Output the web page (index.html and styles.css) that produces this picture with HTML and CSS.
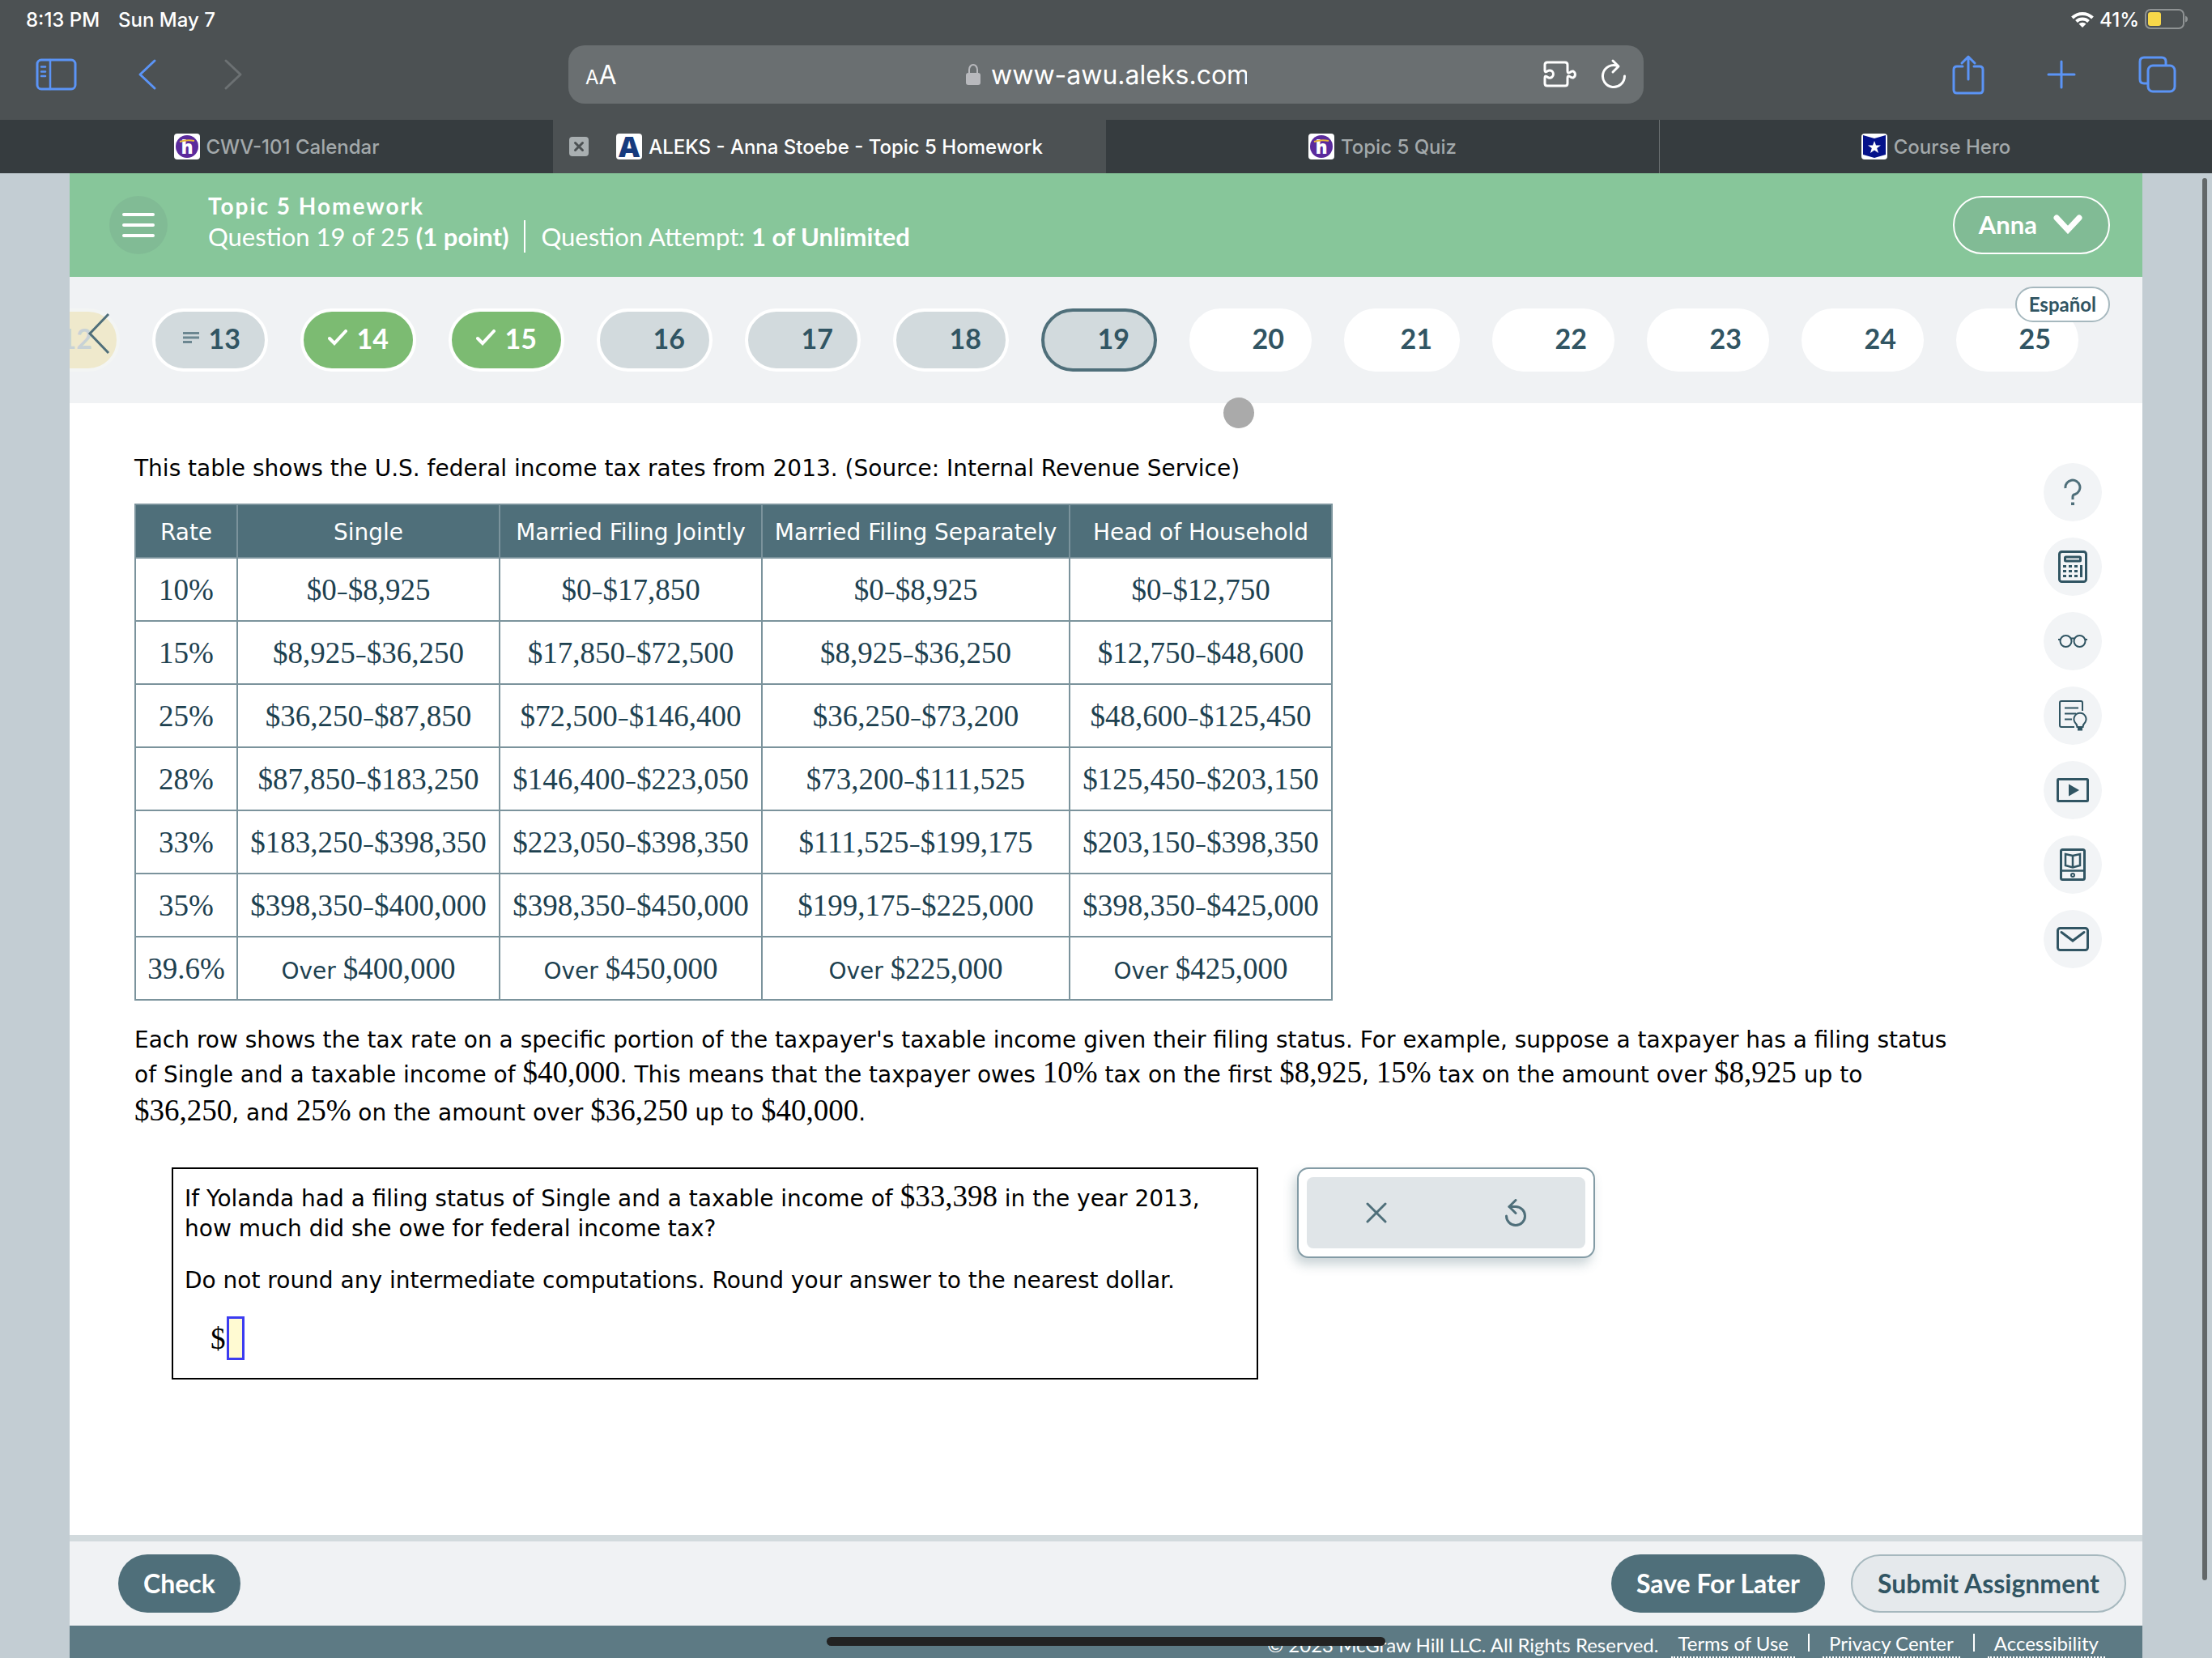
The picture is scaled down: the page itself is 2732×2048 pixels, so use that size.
FILE: index.html
```html
<!DOCTYPE html>
<html lang="en">
<head>
    <meta charset="UTF-8">
    <meta name="viewport" content="width=device-width, initial-scale=1.0">
    <title>ALEKS - Anna Stoebe - Topic 5 Homework</title>
    <link rel="stylesheet" href="styles.css">
</head>
<body>
    <header class="browser">
        <div class="status-bar">
            <span>8:13 PM</span>
            <span class="status-date">Sun May 7</span>
            <div class="status-right">
                <svg width="28" height="20" viewBox="0 0 28 20" fill="none" stroke="#fff" stroke-width="4">
                    <path d="M1.500 8a18 18 0 0 1 25 0"/>
                    <path d="M6.500 12.500a11 11 0 0 1 15 0"/>
                    <path d="M14 20l-4.500-4.500a6.500 6.500 0 0 1 9 0z" fill="#fff" stroke="none"/>
                </svg>
                <span>41%</span>
                <svg width="54" height="26" viewBox="0 0 54 26">
                    <rect x="1" y="1" width="47" height="23" rx="6" fill="none" stroke="#8f9394" stroke-width="2"/>
                    <rect x="4" y="4" width="16" height="17" rx="3" fill="#f8d84a"/>
                    <path d="M50 8.500q3 1 3 4t-3 4z" fill="#8f9394"/>
                </svg>
            </div>
        </div>

        <div class="toolbar">
            <div class="toolbar-left">
                <button class="icon-btn" type="button" aria-label="Sidebar">
                    <svg width="52" height="42" viewBox="0 0 52 42" fill="none" stroke="#5b94f6" stroke-width="3" stroke-linecap="round">
                        <rect x="2" y="3" width="47" height="36" rx="5"/>
                        <path d="M18 3v36M7 11.500h5M7 17.500h5M7 23h5" stroke-width="2.500"/>
                    </svg>
                </button>
                <button class="icon-btn btn-back" type="button" aria-label="Back">
                    <svg width="24" height="40" viewBox="0 0 24 40" fill="none" stroke="#5b94f6" stroke-width="3" stroke-linecap="round" stroke-linejoin="round"><path d="M21 3L3 20l18 17"/></svg>
                </button>
                <button class="icon-btn btn-forward" type="button" aria-label="Forward">
                    <svg width="24" height="40" viewBox="0 0 24 40" fill="none" stroke="#6c7173" stroke-width="3" stroke-linecap="round" stroke-linejoin="round"><path d="M3 3l18 17L3 37"/></svg>
                </button>
            </div>

            <div class="address-bar">
                <button class="icon-btn text-size" type="button" aria-label="Page settings"><span class="small-a">A</span>A</button>
                <div class="address">
                    <svg width="20" height="28" viewBox="0 0 20 28">
                        <rect x="1" y="12" width="18" height="15" rx="3" fill="#b8b9bd"/>
                        <path d="M5 13V8a5 6 0 0 1 10 0v5" fill="none" stroke="#b8b9bd" stroke-width="2"/>
                    </svg>
                    <input class="address-input" type="text" value="www-awu.aleks.com" aria-label="Address">
                </div>
                <div class="address-actions">
                    <button class="icon-btn" type="button" aria-label="Extensions">
                        <svg width="44" height="36" viewBox="0 0 44 36" fill="none" stroke="#fff" stroke-width="3" stroke-linejoin="round">
                            <path d="M6 3h22q3 0 3 3v8q0 3 3 1.500q2-2 4-1.500a4.500 4.500 0 0 1 0 8q-2 .500-4-1.500q-3-1.500-3 1.500v7q0 3-3 3H6q-3 0-3-3v-7q0-3 3-1q3 2.500 6 0a5 5 0 0 0 0-7q-3-2-6 0q-3 2-3-1V6q0-3 3-3z"/>
                        </svg>
                    </button>
                    <button class="icon-btn" type="button" aria-label="Reload">
                        <svg width="32" height="40" viewBox="0 0 32 40" fill="none" stroke="#fff" stroke-width="3" stroke-linecap="round" stroke-linejoin="round">
                            <path d="M21 9.500A13.500 13.500 0 1 0 29.500 22"/>
                            <path d="M15 3l7 7-7 7"/>
                        </svg>
                    </button>
                </div>
            </div>

            <div class="toolbar-right">
                <button class="icon-btn" type="button" aria-label="Share">
                    <svg width="42" height="52" viewBox="0 0 42 52" fill="none" stroke="#5b94f6" stroke-width="3" stroke-linecap="round" stroke-linejoin="round">
                        <path d="M14 16H7q-4 0-4 4v25q0 4 4 4h28q4 0 4-4V20q0-4-4-4h-7"/>
                        <path d="M21 32V4M13 12l8-8 8 8"/>
                    </svg>
                </button>
                <button class="icon-btn" type="button" aria-label="New tab">
                    <svg width="38" height="38" viewBox="0 0 38 38" fill="none" stroke="#5b94f6" stroke-width="3" stroke-linecap="round"><path d="M19 3v32M3 19h32"/></svg>
                </button>
                <button class="icon-btn" type="button" aria-label="Show tabs">
                    <svg width="48" height="48" viewBox="0 0 48 48" fill="none" stroke="#5b94f6" stroke-width="3">
                        <rect x="13" y="13" width="33" height="32" rx="6"/>
                        <path d="M13 35H8q-5 0-5-5V8q0-5 5-5h22q5 0 5 5v5"/>
                    </svg>
                </button>
            </div>
        </div>

        <nav class="tabs">
            <div class="tab">
                <a class="tab-link" href="#">
                    <svg class="favicon" viewBox="0 0 32 32">
                        <rect width="32" height="32" rx="4" fill="#fff"/>
                        <circle cx="16" cy="16" r="14" fill="#5b2a9c"/>
                        <text x="16" y="25" text-anchor="middle" font-family="Open Sans, sans-serif" font-weight="800" font-size="22" fill="#fff">h</text>
                        <path d="M7 10q9-3 18-1" stroke="#e8b73a" stroke-width="2" fill="none"/>
                    </svg>
                    CWV-101 Calendar
                </a>
            </div>
            <div class="tab active">
                <button class="tab-close" type="button" aria-label="Close tab">
                    <svg width="24" height="24" viewBox="0 0 24 24" stroke="#4c5153" stroke-width="3" stroke-linecap="round"><path d="M7.500 7.500l9 9M16.500 7.500l-9 9"/></svg>
                </button>
                <a class="tab-link" href="#">
                    <svg class="favicon" viewBox="0 0 32 32">
                        <rect width="32" height="32" rx="4" fill="#fff"/>
                        <text x="16" y="29" text-anchor="middle" font-family="Open Sans, sans-serif" font-weight="800" font-size="36" fill="#163a7d">A</text>
                    </svg>
                    ALEKS - Anna Stoebe - Topic 5 Homework
                </a>
            </div>
            <div class="tab">
                <a class="tab-link" href="#">
                    <svg class="favicon" viewBox="0 0 32 32">
                        <rect width="32" height="32" rx="4" fill="#fff"/>
                        <circle cx="16" cy="16" r="14" fill="#5b2a9c"/>
                        <text x="16" y="25" text-anchor="middle" font-family="Open Sans, sans-serif" font-weight="800" font-size="22" fill="#fff">h</text>
                        <path d="M7 10q9-3 18-1" stroke="#e8b73a" stroke-width="2" fill="none"/>
                    </svg>
                    Topic 5 Quiz
                </a>
            </div>
            <div class="tab">
                <a class="tab-link" href="#">
                    <svg class="favicon" viewBox="0 0 32 32">
                        <rect width="32" height="32" rx="4" fill="#fff"/>
                        <path d="M2 2l14 4 14-4v24l-14 4-14-4z" fill="#05128a"/>
                        <path d="M16 9l2 5.500h6l-4.800 3.500 1.800 6-5-3.500-5 3.500 1.800-6L8 14.500h6z" fill="#fff"/>
                    </svg>
                    Course Hero
                </a>
            </div>
        </nav>
    </header>

    <div class="page">
        <header class="hw-header">
            <button class="menu-btn" type="button" aria-label="Menu">
                <svg width="40" height="30" viewBox="0 0 40 30" stroke="#fff" stroke-width="4" stroke-linecap="round"><path d="M2 2h36M2 15h36M2 28h36"/></svg>
            </button>
            <div class="hw-titles">
                <h1 class="hw-title">Topic 5 Homework</h1>
                <div class="hw-info">
                    <span>Question 19 of 25 <b>(1 point)</b></span>
                    <span class="hw-attempt">Question Attempt: <b>1 of Unlimited</b></span>
                </div>
            </div>
            <button class="user-btn" type="button">
                Anna
                <svg width="36" height="24" viewBox="0 0 36 24" fill="none" stroke="#fff" stroke-width="7" stroke-linecap="round"><path d="M4 4l14 15L32 4"/></svg>
            </button>
        </header>

        <nav class="question-nav">
            <div class="pills">
                <a class="pill partial" href="#">12</a>
                <a class="pill" href="#"><svg width="20" height="14" viewBox="0 0 20 14" stroke="#6c8791" stroke-width="3"><path d="M0 1.500h20M0 7h20M0 12.500h11"/></svg>13</a>
                <a class="pill done" href="#"><svg width="24" height="20" viewBox="0 0 24 20" fill="none" stroke="#fff" stroke-width="4" stroke-linecap="round"><path d="M2 11l6 6L22 2"/></svg>14</a>
                <a class="pill done" href="#"><svg width="24" height="20" viewBox="0 0 24 20" fill="none" stroke="#fff" stroke-width="4" stroke-linecap="round"><path d="M2 11l6 6L22 2"/></svg>15</a>
                <a class="pill" href="#">16</a>
                <a class="pill" href="#">17</a>
                <a class="pill" href="#">18</a>
                <a class="pill current" href="#">19</a>
                <a class="pill new wide" href="#">20</a>
                <a class="pill new" href="#">21</a>
                <a class="pill new wide" href="#">22</a>
                <a class="pill new wide" href="#">23</a>
                <a class="pill new wide" href="#">24</a>
                <a class="pill new wide" href="#">25</a>
            </div>
            <button class="nav-prev" type="button" aria-label="Previous questions">
                <svg width="28" height="52" viewBox="0 0 28 52" fill="none" stroke="#4f6f7a" stroke-width="3"><path d="M26 2L3 26l23 24"/></svg>
            </button>
            <button class="lang-btn" type="button">Español</button>
            <span class="pointer-dot"></span>
        </nav>

        <main class="content">
            <div class="question">
                <p>This table shows the U.S. federal income tax rates from 2013. (Source: Internal Revenue Service)</p>

                <table class="tax-table">
                    <thead>
                        <tr>
                            <th class="col-rate">Rate</th>
                            <th>Single</th>
                            <th>Married Filing Jointly</th>
                            <th class="col-sep">Married Filing Separately</th>
                            <th>Head of Household</th>
                        </tr>
                    </thead>
                    <tbody>
                        <tr>
                            <td><span class="num">10%</span></td>
                            <td><span class="num">$0</span>–<span class="num">$8,925</span></td>
                            <td><span class="num">$0</span>–<span class="num">$17,850</span></td>
                            <td><span class="num">$0</span>–<span class="num">$8,925</span></td>
                            <td><span class="num">$0</span>–<span class="num">$12,750</span></td>
                        </tr>
                        <tr>
                            <td><span class="num">15%</span></td>
                            <td><span class="num">$8,925</span>–<span class="num">$36,250</span></td>
                            <td><span class="num">$17,850</span>–<span class="num">$72,500</span></td>
                            <td><span class="num">$8,925</span>–<span class="num">$36,250</span></td>
                            <td><span class="num">$12,750</span>–<span class="num">$48,600</span></td>
                        </tr>
                        <tr>
                            <td><span class="num">25%</span></td>
                            <td><span class="num">$36,250</span>–<span class="num">$87,850</span></td>
                            <td><span class="num">$72,500</span>–<span class="num">$146,400</span></td>
                            <td><span class="num">$36,250</span>–<span class="num">$73,200</span></td>
                            <td><span class="num">$48,600</span>–<span class="num">$125,450</span></td>
                        </tr>
                        <tr>
                            <td><span class="num">28%</span></td>
                            <td><span class="num">$87,850</span>–<span class="num">$183,250</span></td>
                            <td><span class="num">$146,400</span>–<span class="num">$223,050</span></td>
                            <td><span class="num">$73,200</span>–<span class="num">$111,525</span></td>
                            <td><span class="num">$125,450</span>–<span class="num">$203,150</span></td>
                        </tr>
                        <tr>
                            <td><span class="num">33%</span></td>
                            <td><span class="num">$183,250</span>–<span class="num">$398,350</span></td>
                            <td><span class="num">$223,050</span>–<span class="num">$398,350</span></td>
                            <td><span class="num">$111,525</span>–<span class="num">$199,175</span></td>
                            <td><span class="num">$203,150</span>–<span class="num">$398,350</span></td>
                        </tr>
                        <tr>
                            <td><span class="num">35%</span></td>
                            <td><span class="num">$398,350</span>–<span class="num">$400,000</span></td>
                            <td><span class="num">$398,350</span>–<span class="num">$450,000</span></td>
                            <td><span class="num">$199,175</span>–<span class="num">$225,000</span></td>
                            <td><span class="num">$398,350</span>–<span class="num">$425,000</span></td>
                        </tr>
                        <tr>
                            <td><span class="num">39.6%</span></td>
                            <td>Over <span class="num">$400,000</span></td>
                            <td>Over <span class="num">$450,000</span></td>
                            <td>Over <span class="num">$225,000</span></td>
                            <td>Over <span class="num">$425,000</span></td>
                        </tr>
                    </tbody>
                </table>

                <p>Each row shows the tax rate on a specific portion of the taxpayer's taxable income given their filing status. For example, suppose a taxpayer has a filing status of Single and a taxable income of <span class="num">$40,000</span>. This means that the taxpayer owes <span class="num">10%</span> tax on the first <span class="num">$8,925</span>, <span class="num">15%</span> tax on the amount over <span class="num">$8,925</span> up to <span class="num">$36,250</span>, and <span class="num">25%</span> on the amount over <span class="num">$36,250</span> up to <span class="num">$40,000</span>.</p>

                <div class="answer-row">
                    <form class="answer-box">
                        <p>If Yolanda had a filing status of Single and a taxable income of <span class="num">$33,398</span> in the year 2013, how much did she owe for federal income tax?</p>
                        <p class="note">Do not round any intermediate computations. Round your answer to the nearest dollar.</p>
                        <div class="answer-line">
                            <label class="num" for="answer">$</label>
                            <input class="answer-input" type="text" id="answer" name="answer">
                        </div>
                    </form>
                    <div class="answer-tools">
                        <div class="answer-tools-inner">
                            <button class="tool-btn" type="button" aria-label="Clear">
                                <svg width="26" height="26" viewBox="0 0 26 26" stroke="#4f6f7a" stroke-width="3" stroke-linecap="round"><path d="M2 2l22 22M24 2L2 24"/></svg>
                            </button>
                            <button class="tool-btn" type="button" aria-label="Undo">
                                <svg width="26" height="34" viewBox="0 0 26 34" fill="none" stroke="#4f6f7a" stroke-width="3" stroke-linecap="round" stroke-linejoin="round"><path d="M5 9.500h8A11.500 11.500 0 1 1 1.500 21"/><path d="M13 1.500l-8 8 8 8"/></svg>
                            </button>
                        </div>
                    </div>
                </div>
            </div>

            <aside class="side-tools">
                <button class="side-btn" type="button" aria-label="Help">
                    <svg width="22" height="34" viewBox="0 0 22 34" fill="none" stroke="#4f6f7a" stroke-width="3"><path d="M2 12a9 9 0 1 1 12 7.500q-3 .500-3 3V26"/><path d="M11 29.500v3.500" stroke-width="4"/></svg>
                </button>
                <button class="side-btn" type="button" aria-label="Calculator">
                    <svg width="36" height="40" viewBox="0 0 36 40" fill="none" stroke="#315563" stroke-width="3">
                        <rect x="1.500" y="1.500" width="33" height="37" rx="3"/>
                        <rect x="8.500" y="8" width="19" height="5" rx="1"/>
                        <path d="M6 19.500h18M6 25.500h18M6 31.500h18" stroke-dasharray="4 3"/>
                        <path d="M28.500 18v15"/>
                    </svg>
                </button>
                <button class="side-btn" type="button" aria-label="Glasses view">
                    <svg width="36" height="18" viewBox="0 0 36 18" fill="none" stroke="#315563" stroke-width="2">
                        <circle cx="9.500" cy="9" r="7"/><circle cx="26.500" cy="9" r="7"/>
                        <path d="M0 7h3M33 7h3M15.500 5.500h5"/>
                    </svg>
                </button>
                <button class="side-btn" type="button" aria-label="Explanation">
                    <svg width="36" height="40" viewBox="0 0 36 40" fill="none" stroke="#315563" stroke-width="2">
                        <path d="M20 34H4q-2 0-2-2V4q0-2 2-2h24q2 0 2 2v10"/>
                        <path d="M8 10.500h17M8 17.500h14M8 24.500h9"/>
                        <path d="M23.500 34q0-3-3-6a7.500 7.500 0 1 1 13 0q-3 3-3 6z"/>
                        <path d="M24 36.500h6" stroke-width="4"/>
                    </svg>
                </button>
                <button class="side-btn" type="button" aria-label="Video">
                    <svg width="40" height="30" viewBox="0 0 40 30"><rect x="1.500" y="1.500" width="37" height="27" rx="1" fill="none" stroke="#315563" stroke-width="3"/><path d="M15 7.500v15L28 15z" fill="#315563"/></svg>
                </button>
                <button class="side-btn" type="button" aria-label="eBook">
                    <svg width="32" height="40" viewBox="0 0 32 40" fill="none" stroke="#315563" stroke-width="3">
                        <rect x="1.500" y="1.500" width="29" height="37" rx="2"/>
                        <path d="M2 27.500h28M16 9v15M7 7l9 2 9-2v14l-9 2.500L7 21z" stroke-width="2.500"/>
                        <circle cx="16" cy="33" r="2" stroke-width="2"/>
                    </svg>
                </button>
                <button class="side-btn" type="button" aria-label="Message">
                    <svg width="40" height="30" viewBox="0 0 40 30" fill="none" stroke="#315563" stroke-width="3" stroke-linecap="round"><rect x="1.500" y="1.500" width="37" height="27" rx="3"/><path d="M6 6.500l14 10.500L34 6.500"/></svg>
                </button>
            </aside>
        </main>

        <div class="actions">
            <button class="btn" type="button">Check</button>
            <button class="btn btn-save" type="button">Save For Later</button>
            <button class="btn btn-outline" type="button">Submit Assignment</button>
        </div>

        <footer class="footer">
            <span class="copyright">© 2023 McGraw Hill LLC. All Rights Reserved.</span>
            <a href="#">Terms of Use</a>
            <a href="#">Privacy Center</a>
            <a href="#">Accessibility</a>
        </footer>
    </div>

    <div class="scrollbar"></div>
    <div class="home-bar"></div>
</body>
</html>
```
FILE: styles.css
```css
* {
    box-sizing: border-box;
}
body {
    margin: 0;
    min-height: 100vh;
    display: flex;
    flex-direction: column;
    position: relative;
    overflow: hidden;
    background: #c3cdd3;
    font-family: Lato, sans-serif;
}
button {
    font-family: inherit;
    cursor: pointer;
}
a {
    color: inherit;
    text-decoration: none;
}
svg {
    display: block;
    flex: none;
}

/* browser chrome */
.browser {
    background: #4c5153;
    color: #fff;
    font-family: Inter, sans-serif;
}
.status-bar {
    display: flex;
    align-items: center;
    height: 48px;
    padding: 0 29px 0 32px;
    font-size: 24px;
    font-weight: 500;
}
.status-date {
    margin-left: 23px;
}
.status-right {
    display: flex;
    align-items: center;
    gap: 7px;
    margin-left: auto;
}
.icon-btn {
    padding: 0;
    border: none;
    background: none;
    color: #fff;
}
.toolbar {
    display: grid;
    grid-template-columns: 1fr minmax(0, 1328px) 1fr;
    align-items: center;
    padding: 8px 0 20px;
}
.toolbar-left {
    display: flex;
    align-items: center;
    padding-left: 44px;
}
.btn-back {
    margin-left: 74px;
}
.btn-forward {
    margin-left: 82px;
}
.toolbar-right {
    display: flex;
    align-items: center;
    justify-content: flex-end;
    gap: 75px;
    padding-right: 44px;
}
.address-bar {
    display: grid;
    grid-template-columns: 1fr auto 1fr;
    align-items: center;
    height: 72px;
    padding: 0 21px;
    border-radius: 20px;
    background: #6a6f71;
}
.text-size {
    justify-self: start;
    font-size: 32px;
}
.small-a {
    font-size: 24px;
}
.address {
    display: flex;
    align-items: center;
    gap: 12px;
}
.address-input {
    width: 316px;
    padding: 0;
    border: none;
    outline: none;
    background: none;
    color: #fff;
    font-family: inherit;
    font-size: 32px;
}
.address-actions {
    display: flex;
    align-items: center;
    justify-content: flex-end;
    gap: 28px;
}
.tabs {
    display: grid;
    grid-template-columns: repeat(4, 1fr);
}
.tab {
    display: grid;
    grid-template-columns: 24px 1fr 24px;
    align-items: center;
    height: 66px;
    padding: 0 20px;
    background: #363c3f;
    color: #a3a9ab;
    font-size: 24px;
    font-weight: 500;
}
.tab:last-child {
    border-left: 1px solid #6a6f71;
}
.tab.active {
    background: #4c5153;
    color: #fff;
}
.tab-close {
    padding: 0;
    border: none;
    border-radius: 4px;
    background: #a9afb1;
}
.tab-link {
    grid-column: 2;
    display: flex;
    align-items: center;
    justify-content: center;
    gap: 8px;
    white-space: nowrap;
}
.favicon {
    width: 32px;
    height: 32px;
}

/* homework page */
.page {
    flex: 1;
    display: flex;
    flex-direction: column;
    margin: 0 86px;
    background: #fff;
}
.hw-header {
    display: flex;
    align-items: center;
    height: 128px;
    padding: 0 40px 0 49px;
    background: #87c69a;
    color: #fff;
}
.menu-btn {
    display: flex;
    align-items: center;
    justify-content: center;
    width: 72px;
    height: 72px;
    border: none;
    border-radius: 50%;
    background: #81bb95;
}
.hw-titles {
    margin-left: 50px;
    padding-bottom: 8px;
}
.hw-title {
    margin: 0;
    font-size: 28px;
    line-height: 36px;
    font-weight: 700;
    letter-spacing: 2px;
}
.hw-info {
    display: flex;
    align-items: center;
    font-size: 31px;
    line-height: 40px;
}
.hw-attempt {
    margin-left: 19px;
    padding-left: 19px;
    border-left: 2px solid #fff;
}
.user-btn {
    display: flex;
    align-items: center;
    gap: 20px;
    height: 72px;
    margin-left: auto;
    padding: 0 32px 2px 30px;
    border: 2px solid #fff;
    border-radius: 36px;
    background: #81bb95;
    color: #fff;
    font-size: 31px;
    font-weight: 700;
}
.question-nav {
    position: relative;
    height: 156px;
    padding-top: 39px;
    background: #f0f2f4;
}
.pills {
    display: flex;
    justify-content: flex-end;
    gap: 40px;
    padding-right: 79px;
    overflow: hidden;
}
.pill {
    display: flex;
    flex: none;
    align-items: center;
    justify-content: flex-end;
    gap: 12px;
    width: 143px;
    height: 78px;
    padding: 0 30px 6px 0;
    border: 4px solid #fff;
    border-radius: 39px;
    background: #d2dadd;
    color: #315563;
    font-size: 34px;
    font-weight: 700;
}
.pill.wide {
    width: 151px;
}
.pill.partial {
    border-color: #f3f5f4;
    background: #efe9cc;
    color: #c8d2d6;
}
.pill.done {
    background: #7cbb72;
    color: #fff;
}
.pill.current {
    border-color: #4f6f7a;
}
.pill.new {
    background: #fff;
}
.nav-prev {
    position: absolute;
    left: 22px;
    top: 44px;
    padding: 0;
    border: none;
    background: none;
}
.lang-btn {
    position: absolute;
    right: 40px;
    top: 12px;
    height: 44px;
    padding: 0 15px 2px;
    border: 2px solid #a6b8be;
    border-radius: 22px;
    background: #fff;
    color: #315563;
    font-size: 24px;
    font-weight: 700;
}
.pointer-dot {
    position: absolute;
    left: 1425px;
    top: 149px;
    width: 38px;
    height: 38px;
    border-radius: 50%;
    background: #aaa;
}

/* question */
.content {
    flex: 1;
    display: flex;
    gap: 106px;
    padding: 64px 50px 0 80px;
}
.question {
    flex: 1;
    color: #000;
    font-family: Verdana, "DejaVu Sans", sans-serif;
    font-size: 28px;
}
.question p {
    margin: 0;
}
.num {
    font-family: "Liberation Serif", serif;
    font-size: 37px;
    line-height: 47px;
}
.tax-table {
    margin: 27px 0 32px;
    border-collapse: collapse;
    color: #1d4150;
    text-align: center;
}
.tax-table th {
    width: 324px;
    height: 66px;
    padding: 2px 0 0;
    border: 2px solid #7b939c;
    background: #4f6f7a;
    color: #fff;
    font-weight: 400;
}
.tax-table td {
    height: 78px;
    padding: 0;
    border: 2px solid #7b939c;
}
.tax-table .col-rate {
    width: 126px;
}
.tax-table .col-sep {
    width: 380px;
}
.answer-row {
    display: flex;
    align-items: flex-start;
    gap: 48px;
    margin: 47px 0 0 46px;
}
.answer-box {
    width: 1342px;
    padding: 10px 14px 22px;
    border: 2px solid #000;
}
.answer-box .note {
    margin-top: 31px;
}
.answer-line {
    display: flex;
    align-items: center;
    margin: 28px 0 0 32px;
}
.answer-input {
    width: 22px;
    height: 54px;
    margin-left: 1px;
    padding: 0;
    border: 3px solid #3c3cf0;
    background: #fffad2;
    font-size: 28px;
}
.answer-tools {
    width: 368px;
    padding: 10px;
    border: 2px solid #839ba5;
    border-radius: 14px;
    background: #fff;
    box-shadow: -4px 8px 14px rgba(79, 111, 122, 0.3);
}
.answer-tools-inner {
    display: flex;
    height: 88px;
    border-radius: 8px;
    background: #e0e5e8;
}
.tool-btn {
    flex: 1;
    display: flex;
    align-items: center;
    justify-content: center;
    border: none;
    background: none;
}
.side-tools {
    display: flex;
    flex-direction: column;
    gap: 20px;
    padding-top: 10px;
}
.side-btn {
    display: flex;
    align-items: center;
    justify-content: center;
    width: 72px;
    height: 72px;
    padding: 0;
    border: none;
    border-radius: 50%;
    background: #f2f4f6;
}

/* bottom bars */
.actions {
    display: flex;
    align-items: center;
    height: 112px;
    padding: 0 20px 0 60px;
    border-top: 8px solid #d2dadd;
    background: #f0f2f4;
}
.btn {
    height: 72px;
    padding: 0 31px 2px;
    border: none;
    border-radius: 36px;
    background: #4f6f7a;
    color: #fff;
    font-size: 32px;
    font-weight: 700;
}
.btn-save {
    margin-left: auto;
    margin-right: 32px;
}
.btn-outline {
    border: 2px solid #a6b8be;
    background: #e5e9ec;
    color: #315563;
}
.footer {
    display: flex;
    justify-content: flex-end;
    height: 40px;
    padding-right: 46px;
    overflow: hidden;
    background: #5d7a84;
    color: #fff;
    font-size: 24px;
    line-height: 44px;
}
.copyright {
    margin-right: 16px;
    line-height: 48px;
}
.footer a {
    position: relative;
    height: 40px;
    padding: 0 8px;
    border-bottom: 2px dotted #fff;
}
.footer a + a {
    margin-left: 34px;
}
.footer a + a::before {
    content: "";
    position: absolute;
    left: -18px;
    top: 10px;
    width: 2px;
    height: 22px;
    background: #fff;
}
.scrollbar {
    position: absolute;
    right: 6px;
    top: 220px;
    bottom: 96px;
    width: 6px;
    border-radius: 3px;
    background: #636869;
}
.home-bar {
    position: absolute;
    left: 50%;
    bottom: 15px;
    width: 690px;
    height: 11px;
    margin-left: -345px;
    border-radius: 6px;
    background: #222;
}
```
